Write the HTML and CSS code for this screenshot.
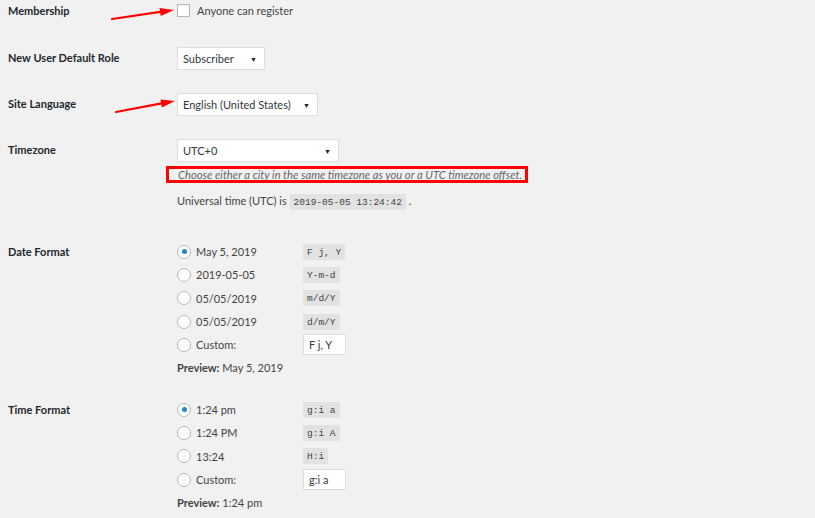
FILE: index.html
```html
<!DOCTYPE html>
<html lang="en">
<head>
  <meta charset="UTF-8">
  <title>General Settings</title>
  <link rel="stylesheet" href="styles.css">
</head>
<body>

<div class="settings-table">
  <div class="settings-row row-membership">
    <div class="settings-label">Membership</div>
    <div class="settings-field">
      <label class="check-line"><span class="checkbox"></span>Anyone can register</label>
    </div>
  </div>

  <div class="settings-row row-role">
    <div class="settings-label">New User Default Role</div>
    <div class="settings-field">
      <div class="select select-role">Subscriber<span class="caret">&#9660;</span></div>
    </div>
  </div>

  <div class="settings-row row-language">
    <div class="settings-label">Site Language</div>
    <div class="settings-field">
      <div class="select select-language">English (United States)<span class="caret">&#9660;</span></div>
    </div>
  </div>

  <div class="settings-row row-timezone">
    <div class="settings-label">Timezone</div>
    <div class="settings-field">
      <div class="select select-timezone">UTC+0<span class="caret">&#9660;</span></div>
      <p class="description">Choose either a city in the same timezone as you or a UTC timezone offset.</p>
      <p class="utc-line">Universal time (UTC) is <code>2019-05-05 13:24:42</code> .</p>
    </div>
  </div>

  <div class="settings-row row-date">
    <div class="settings-label">Date Format</div>
    <div class="settings-field">
      <div class="radio-line"><span class="radio checked"></span><span class="radio-text">May 5, 2019</span><code>F j, Y</code></div>
      <div class="radio-line"><span class="radio"></span><span class="radio-text">2019-05-05</span><code>Y-m-d</code></div>
      <div class="radio-line"><span class="radio"></span><span class="radio-text">05/05/2019</span><code>m/d/Y</code></div>
      <div class="radio-line"><span class="radio"></span><span class="radio-text">05/05/2019</span><code>d/m/Y</code></div>
      <div class="radio-line"><span class="radio"></span><span class="radio-text">Custom:</span><span class="text-input">F j, Y</span></div>
      <p class="preview"><strong>Preview:</strong> May 5, 2019</p>
    </div>
  </div>

  <div class="settings-row row-time">
    <div class="settings-label">Time Format</div>
    <div class="settings-field">
      <div class="radio-line"><span class="radio checked"></span><span class="radio-text">1:24 pm</span><code>g:i a</code></div>
      <div class="radio-line"><span class="radio"></span><span class="radio-text">1:24 PM</span><code>g:i A</code></div>
      <div class="radio-line"><span class="radio"></span><span class="radio-text">13:24</span><code>H:i</code></div>
      <div class="radio-line"><span class="radio"></span><span class="radio-text">Custom:</span><span class="text-input">g:i a</span></div>
      <p class="preview"><strong>Preview:</strong> 1:24 pm</p>
    </div>
  </div>
</div>

<!-- annotation arrows -->
<svg class="arrow arrow-one" width="70" height="24" viewBox="0 0 70 24">
  <path d="M2 19 L52 11.7" stroke="#f00" stroke-width="2.2" stroke-linecap="round"/>
  <path d="M64 10 L49.5 8 L50.7 16 Z" fill="#f00"/>
</svg>
<svg class="arrow arrow-two" width="70" height="24" viewBox="0 0 70 24">
  <path d="M4 20 L51 11.2" stroke="#f00" stroke-width="2.2" stroke-linecap="round"/>
  <path d="M63 9 L48.5 7.6 L49.9 15.5 Z" fill="#f00"/>
</svg>

</body>
</html>
```

FILE: styles.css
```css
* {
  margin: 0;
  padding: 0;
  box-sizing: border-box;
}

body {
  font-family: Lato, "Noto Sans", Arial, sans-serif;
  font-size: 11px;
  color: #444;
  background-color: #f1f1f1;
  position: relative;
  min-height: 518px;
  overflow: hidden;
}

.settings-table {
  padding-left: 8px;
}

.settings-row {
  display: flex;
  align-items: flex-start;
}

.settings-label {
  width: 169px;
  flex-shrink: 0;
  font-weight: 700;
  color: #23282d;
  line-height: 22px;
}

.settings-field {
  flex-grow: 1;
  white-space: nowrap;
}

.row-membership {
  height: 47px;
}

.check-line {
  display: flex;
  align-items: center;
  height: 21px;
}

.checkbox {
  width: 13px;
  height: 13px;
  border: 1px solid #b4b9be;
  background-color: #fff;
  margin-right: 7px;
  box-shadow: inset 0 1px 2px rgba(0, 0, 0, 0.07);
}

.row-role,
.row-language {
  height: 46px;
}

.select {
  display: flex;
  align-items: center;
  justify-content: space-between;
  height: 23px;
  padding: 0 7px 0 5px;
  background-color: #fff;
  border: 1px solid #ddd;
  color: #32373c;
}

.select-role {
  width: 88px;
}

.select-language {
  width: 141px;
}

.select-timezone {
  width: 162px;
}

.caret {
  font-size: 7px;
  color: #222;
}

.row-timezone {
  height: 101px;
}

.description {
  display: inline-block;
  margin: 4px 0 0 -11px;
  padding: 0 3px 0 9px;
  border: 3px solid #ff0000;
  font-style: italic;
  font-size: 11.2px;
  color: #666;
  line-height: 11px;
}

.utc-line {
  margin-top: 9px;
  line-height: 18px;
}

code {
  font-family: "Liberation Mono", "DejaVu Sans Mono", monospace;
  font-size: 9.5px;
  background-color: #e2e2e2;
  color: #444;
  padding: 3px 4px 2px;
}

.radio-line {
  display: flex;
  align-items: center;
  height: 23.3px;
}

.radio {
  width: 14px;
  height: 14px;
  border-radius: 50%;
  border: 1px solid #b4b9be;
  background-color: #fff;
  margin-right: 5px;
  position: relative;
  flex-shrink: 0;
}

.radio.checked::after {
  content: "";
  position: absolute;
  left: 3.5px;
  top: 3.5px;
  width: 5px;
  height: 5px;
  border-radius: 50%;
  background-color: #1e8cbe;
}

.radio-text {
  width: 107px;
}

.text-input {
  display: inline-block;
  width: 43px;
  height: 21px;
  line-height: 19px;
  border: 1px solid #ddd;
  background-color: #fff;
  padding-left: 5px;
  color: #32373c;
}

.preview {
  line-height: 23px;
}

.preview strong {
  font-weight: 700;
}

.row-date .settings-label,
.row-time .settings-label {
  line-height: 23px;
}

.row-date {
  height: 158px;
}

.arrow {
  position: absolute;
}

.arrow-one {
  left: 110px;
  top: 0;
}

.arrow-two {
  left: 112px;
  top: 92px;
}
```
